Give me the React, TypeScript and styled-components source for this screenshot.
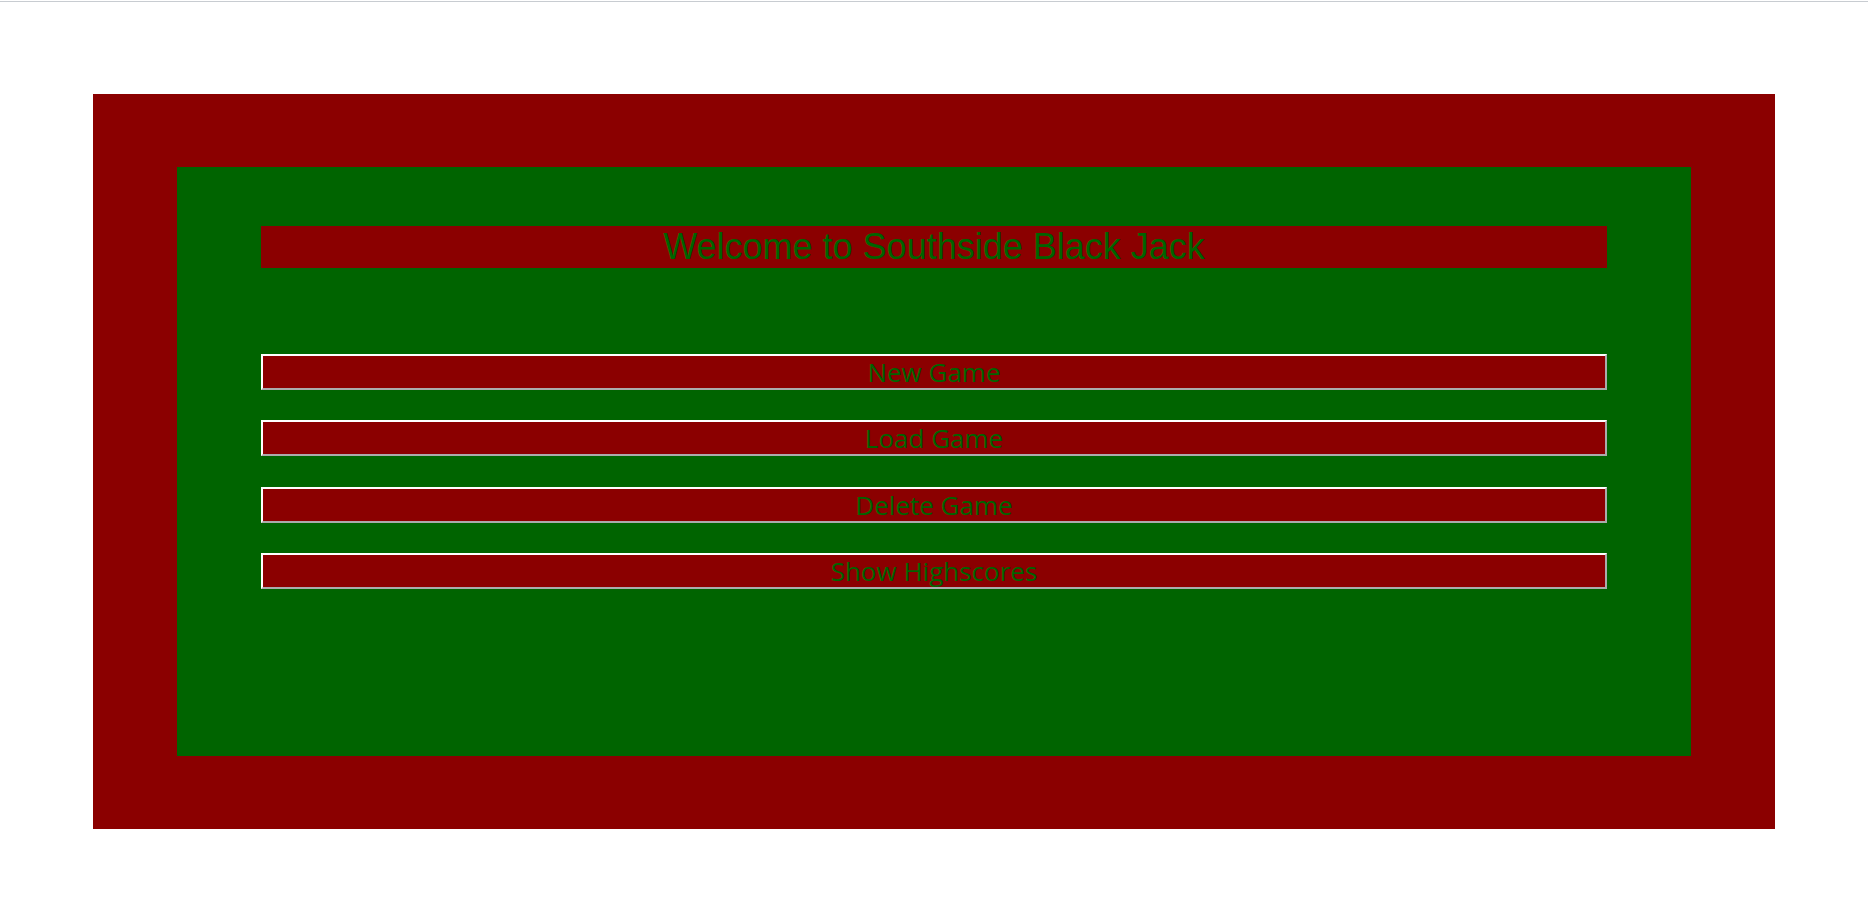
import React from "react";
import styled, { createGlobalStyle } from "styled-components";

const GlobalStyle = createGlobalStyle`
  html, body {
    margin: 0;
    padding: 0;
    background: #ffffff;
  }
`;

const TopRule = styled.div`
  height: 1px;
  margin-top: 1px;
  background: #c8ccd1;
`;

const Table = styled.main`
  box-sizing: border-box;
  width: 1682px;
  margin: 92px auto 0;
  padding: 73px 84px;
  background: #8b0000;
`;

const Felt = styled.section`
  display: flex;
  flex-direction: column;
  padding: 59px 84px 167px;
  background: #006400;
`;

const Title = styled.h1`
  margin: 0;
  background: #8b0000;
  color: #006400;
  font-family: "Liberation Sans", Arial, sans-serif;
  font-size: 36px;
  font-weight: normal;
  line-height: 42px;
  text-align: center;
`;

const Menu = styled.nav`
  display: flex;
  flex-direction: column;
  gap: 30.33px;
  margin-top: 86px;
`;

const MenuButton = styled.button`
  box-sizing: border-box;
  width: 100%;
  height: 36px;
  padding: 0;
  border: 2px outset #ffffff;
  background: #8b0000;
  color: #006400;
  font-family: "Open Sans", "Noto Sans", sans-serif;
  font-size: 26px;
  line-height: 32px;
  text-align: center;
  cursor: pointer;
`;

const items = ["New Game", "Load Game", "Delete Game", "Show Highscores"];

export default function App() {
  return (
    <>
      <GlobalStyle />
      <TopRule />
      <Table>
        <Felt>
          <Title>Welcome to Southside Black Jack</Title>
          <Menu>
            {items.map((label) => (
              <MenuButton key={label} type="button">
                {label}
              </MenuButton>
            ))}
          </Menu>
        </Felt>
      </Table>
    </>
  );
}
